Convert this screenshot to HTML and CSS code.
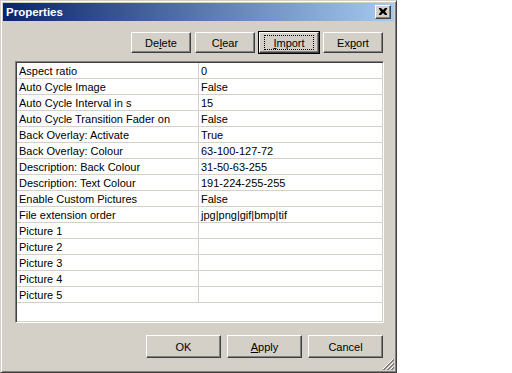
FILE: index.html
```html
<!DOCTYPE html>
<html lang="en">
<head>
  <meta charset="UTF-8">
  <title>Properties</title>
  <link rel="stylesheet" href="styles.css">
</head>
<body>
  <div class="dialog">
    <div class="title-bar">
      <span class="title">Properties</span>
      <button class="close-btn">
        <svg width="8" height="7" viewBox="0 0 8 7"><path d="M0 0h2l2 2 2-2h2v1L6 3.5 8 6v1H6L4 5 2 7H0V6l2-2.5L0 1z" fill="#000"/></svg>
      </button>
    </div>

    <div class="top-buttons">
      <button class="btn">De<u>l</u>ete</button>
      <button class="btn">C<u>l</u>ear</button>
      <button class="btn default"><span class="focus"><u>I</u>mport</span></button>
      <button class="btn">Ex<u>p</u>ort</button>
    </div>

    <div class="prop-grid">
      <div class="prop-row"><div class="name">Aspect ratio</div><div class="value">0</div></div>
      <div class="prop-row"><div class="name">Auto Cycle Image</div><div class="value">False</div></div>
      <div class="prop-row"><div class="name">Auto Cycle Interval in s</div><div class="value">15</div></div>
      <div class="prop-row"><div class="name">Auto Cycle Transition Fader on</div><div class="value">False</div></div>
      <div class="prop-row"><div class="name">Back Overlay: Activate</div><div class="value">True</div></div>
      <div class="prop-row"><div class="name">Back Overlay: Colour</div><div class="value">63-100-127-72</div></div>
      <div class="prop-row"><div class="name">Description: Back Colour</div><div class="value">31-50-63-255</div></div>
      <div class="prop-row"><div class="name">Description: Text Colour</div><div class="value">191-224-255-255</div></div>
      <div class="prop-row"><div class="name">Enable Custom Pictures</div><div class="value">False</div></div>
      <div class="prop-row"><div class="name">File extension order</div><div class="value">jpg|png|gif|bmp|tif</div></div>
      <div class="prop-row"><div class="name">Picture 1</div><div class="value"></div></div>
      <div class="prop-row"><div class="name">Picture 2</div><div class="value"></div></div>
      <div class="prop-row"><div class="name">Picture 3</div><div class="value"></div></div>
      <div class="prop-row"><div class="name">Picture 4</div><div class="value"></div></div>
      <div class="prop-row"><div class="name">Picture 5</div><div class="value"></div></div>
    </div>

    <div class="bottom-buttons">
      <button class="btn wide">OK</button>
      <button class="btn wide"><u>A</u>pply</button>
      <button class="btn wide">Cancel</button>
    </div>

    <svg class="grip" width="12" height="12" viewBox="0 0 12 12">
      <path d="M11 1L1 11M11 5L5 11M11 9L9 11" stroke="#fff" stroke-width="1"/>
      <path d="M12 1L1 12M12 2L2 12M12 5L5 12M12 6L6 12M12 9L9 12M12 10L10 12" stroke="#808080" stroke-width="1"/>
    </svg>
  </div>
</body>
</html>
```

FILE: styles.css
```css
*,*::before,*::after{
  margin: 0;
  padding: 0;
  box-sizing: border-box;
}
body{
  background: #fff;
  font-family: "Liberation Sans", Arial, sans-serif;
  font-size: 11px;
  color: #000;
}

.dialog{
  position: relative;
  width: 397px;
  height: 373px;
  background: #d4d0c8;
  border: 1px solid;
  border-color: #d4d0c8 #404040 #404040 #d4d0c8;
  box-shadow: inset 1px 1px #fff, inset -1px -1px #808080;
  padding: 2px;
  display: flex;
  flex-direction: column;
}

.title-bar{
  height: 18px;
  display: flex;
  align-items: center;
  justify-content: space-between;
  padding: 0 3px 0 3px;
  background: linear-gradient(to right, #0a246a, #a6caf0);
}
.title-bar .title{
  color: #fff;
  font-weight: 700;
  font-size: 11.5px;
}
.close-btn{
  width: 16px;
  height: 14px;
  display: flex;
  align-items: center;
  justify-content: center;
  background: #d4d0c8;
  border: 1px solid;
  border-color: #fff #404040 #404040 #fff;
  box-shadow: inset -1px -1px #808080;
  padding: 0 1px 1px 0;
}

.btn{
  font-family: inherit;
  font-size: 11px;
  color: #000;
  background: #d4d0c8;
  border: 1px solid;
  border-color: #fff #404040 #404040 #fff;
  box-shadow: inset -1px -1px #808080;
  width: 60px;
  height: 21px;
  display: flex;
  align-items: center;
  justify-content: center;
}
.btn u{
  text-decoration: underline;
}
.btn.default{
  outline: 1px solid #000;
  outline-offset: 0;
}
.btn .focus{
  display: flex;
  align-items: center;
  justify-content: center;
  width: 50px;
  height: 15px;
  border: 1px dotted #000;
}
.btn.wide{
  width: 75px;
  height: 23px;
}

.top-buttons{
  display: flex;
  justify-content: flex-end;
  gap: 4px;
  padding-right: 11px;
  margin-top: 11px;
}

.prop-grid{
  margin: 8px 10px 0 12px;
  height: 262px;
  background: #fff;
  border: 1px solid;
  border-color: #808080 #fff #fff #808080;
  box-shadow: inset 1px 1px #404040, inset -1px -1px #d4d0c8;
  padding: 1px;
}
.prop-row{
  display: grid;
  grid-template-columns: 182px 1fr;
  height: 16px;
  border-bottom: 1px solid #d4d0c8;
}
.prop-row .name{
  padding-left: 2px;
  line-height: 16px;
  border-right: 1px solid #d4d0c8;
  white-space: nowrap;
  overflow: hidden;
}
.prop-row .value{
  padding-left: 2px;
  line-height: 16px;
  white-space: nowrap;
}

.bottom-buttons{
  display: flex;
  justify-content: flex-end;
  gap: 6px;
  padding-right: 11px;
  margin-top: 12px;
}

.grip{
  position: absolute;
  right: 2px;
  bottom: 2px;
}
```
